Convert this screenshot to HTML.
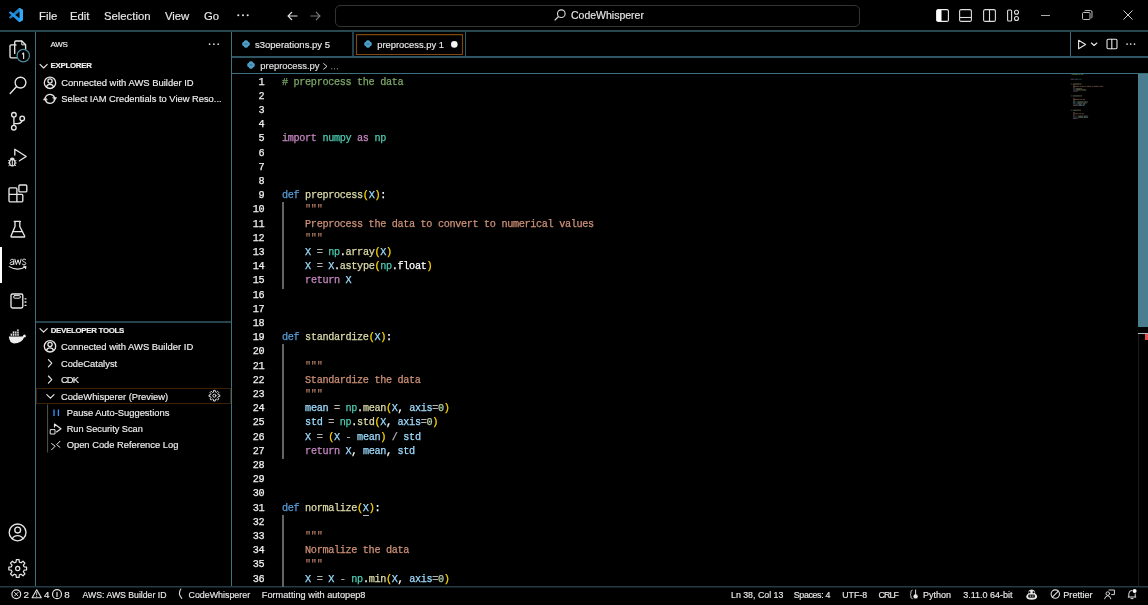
<!DOCTYPE html><html><head><meta charset="utf-8"><style>
html,body{margin:0;padding:0;background:#000;}
body{width:1148px;height:605px;overflow:hidden;position:relative;filter:blur(0.4px);font-family:"Liberation Sans",sans-serif;}
.t{position:absolute;white-space:nowrap;-webkit-text-stroke:0.15px currentColor;}
.r{position:absolute;}
.s{position:absolute;overflow:visible;}
.code{position:absolute;white-space:pre;font-family:"Liberation Mono",monospace;-webkit-text-stroke:0.25px currentColor;}
.code span{-webkit-text-stroke:0.25px currentColor;}
</style></head><body>
<div class="r" style="left:0px;top:30px;width:1148px;height:2px;background:#27484f;"></div>
<div class="r" style="left:35px;top:32px;width:1px;height:554px;background:#40717f;"></div>
<div class="r" style="left:231px;top:32px;width:1px;height:554px;background:#40717f;"></div>
<div class="r" style="left:232px;top:56px;width:916px;height:2px;background:#2d5563;"></div>
<div class="r" style="left:232px;top:73px;width:916px;height:1px;background:#3d6e7d;"></div>
<div class="r" style="left:0px;top:586px;width:1148px;height:1px;background:#223a42;"></div>
<div class="r" style="left:0px;top:587px;width:1148px;height:1px;background:#121f24;"></div>
<div class="r" style="left:36px;top:321px;width:195px;height:2px;background:#25444e;"></div>
<svg class="s" style="left:9px;top:8px" width="14" height="14" viewBox="0 0 100 100"><path fill="#1b80c8" d="M96.46 10.8 L75.86 0.87 C73.47 -0.28 70.62 0.21 68.75 2.08 L1.29 63.57 C-0.52 65.22 -0.52 68.08 1.29 69.73 L6.8 74.74 C8.29 76.09 10.53 76.19 12.13 74.98 L93.36 13.36 C96.08 11.3 100 13.24 100 16.66 V16.42 C100 14.02 98.63 11.84 96.46 10.8 Z"/><path fill="#2196e8" d="M96.46 89.2 L75.86 99.13 C73.47 100.28 70.62 99.79 68.75 97.92 L1.29 36.43 C-0.52 34.78 -0.52 31.92 1.29 30.27 L6.8 25.26 C8.29 23.91 10.53 23.81 12.13 25.02 L93.36 86.64 C96.08 88.7 100 86.76 100 83.34 V83.58 C100 85.98 98.63 88.16 96.46 89.2 Z"/><path fill="#33a6f5" d="M75.86 99.13 C73.47 100.28 70.62 99.79 68.75 97.92 C71.06 100.23 75 98.6 75 95.33 V4.67 C75 1.4 71.06 -0.23 68.75 2.08 C70.62 0.21 73.47 -0.28 75.86 0.87 L96.46 10.79 C98.63 11.84 100 14.02 100 16.42 V83.58 C100 85.98 98.63 88.16 96.46 89.21 Z"/></svg>
<div class="t" style="left:39px;top:10.83px;font-size:11.3px;line-height:11.3px;color:#e8e8e8;">File</div>
<div class="t" style="left:70px;top:10.83px;font-size:11.3px;line-height:11.3px;color:#e8e8e8;">Edit</div>
<div class="t" style="left:104px;top:10.83px;font-size:11.3px;line-height:11.3px;color:#e8e8e8;">Selection</div>
<div class="t" style="left:165px;top:10.83px;font-size:11.3px;line-height:11.3px;color:#e8e8e8;">View</div>
<div class="t" style="left:204px;top:10.83px;font-size:11.3px;line-height:11.3px;color:#e8e8e8;">Go</div>
<svg class="s" style="left:230px;top:10px" width="24" height="10" viewBox="230 10 24 10"><circle cx="238.3" cy="15.3" r="1.05" fill="#e0e0e0"/><circle cx="243" cy="15.3" r="1.05" fill="#e0e0e0"/><circle cx="247.7" cy="15.3" r="1.05" fill="#e0e0e0"/></svg>
<svg class="s" style="left:287px;top:10.6px;" width="11" height="10" viewBox="0 0 11 10" fill="none" stroke="#fff" stroke-width="1"><path d="M10.5 5 H1 M5 1 L1 5 L5 9" stroke="#ddd" stroke-width="1.1"/></svg>
<svg class="s" style="left:310px;top:10.6px;" width="11" height="10" viewBox="0 0 11 10" fill="none" stroke="#fff" stroke-width="1"><path d="M0.5 5 H10 M6 1 L10 5 L6 9" stroke="#777" stroke-width="1.1"/></svg>
<div class="r" style="left:335px;top:5px;width:523px;height:20px;background:transparent;border:1px solid #333;border-radius:5px;"></div>
<svg class="s" style="left:554px;top:9px;" width="12" height="12" viewBox="0 0 12 12" fill="none" stroke="#fff" stroke-width="1"><circle cx="7.3" cy="4.7" r="3.8" stroke="#ddd" stroke-width="1.1"/><path d="M4.5 7.5 L0.7 11.3" stroke="#ddd" stroke-width="1.2"/></svg>
<div class="t" style="left:571px;top:10.41px;font-size:10.5px;line-height:10.5px;color:#e8e8e8;">CodeWhisperer</div>
<svg class="s" style="left:936px;top:9px;" width="13" height="13" viewBox="0 0 13 13" fill="none" stroke="#fff" stroke-width="1"><rect x="0.6" y="0.6" width="11.8" height="11.8" rx="1.5" stroke="#eee" stroke-width="1.1"/><rect x="1" y="1" width="4.5" height="11" fill="#fff" stroke="none"/></svg>
<svg class="s" style="left:959px;top:9px;" width="13" height="13" viewBox="0 0 13 13" fill="none" stroke="#fff" stroke-width="1"><rect x="0.6" y="0.6" width="11.8" height="11.8" rx="1.5" stroke="#ddd" stroke-width="1.1"/><path d="M1 8.5 H12" stroke="#ddd" stroke-width="1.1"/></svg>
<svg class="s" style="left:983px;top:9px;" width="13" height="13" viewBox="0 0 13 13" fill="none" stroke="#fff" stroke-width="1"><rect x="0.6" y="0.6" width="11.8" height="11.8" rx="1.5" stroke="#ddd" stroke-width="1.1"/><path d="M6.5 1 V12" stroke="#ddd" stroke-width="1.1"/></svg>
<svg class="s" style="left:1007px;top:9px;" width="13" height="13" viewBox="0 0 13 13" fill="none" stroke="#fff" stroke-width="1"><rect x="0.6" y="1" width="4" height="11" rx="1" stroke="#ddd" stroke-width="1.1"/><circle cx="9.5" cy="3.2" r="2" stroke="#ddd" stroke-width="1.1"/><circle cx="9.5" cy="9.5" r="2" stroke="#ddd" stroke-width="1.1"/></svg>
<div class="r" style="left:1041px;top:15px;width:9px;height:1px;background:#aaa;"></div>
<svg class="s" style="left:1082px;top:10px;" width="11" height="10" viewBox="0 0 11 10" fill="none" stroke="#fff" stroke-width="1"><rect x="0.5" y="2.5" width="7.5" height="7" rx="1" stroke="#c8c8c8" stroke-width="0.95"/><path d="M2.5 1 Q2.8 0.5 3.5 0.5 H8.5 Q10 0.5 10 2 V7 Q10 7.8 9.2 8" stroke="#c8c8c8" stroke-width="0.95"/></svg>
<svg class="s" style="left:1123px;top:10px;" width="10" height="10" viewBox="0 0 10 10" fill="none" stroke="#fff" stroke-width="1"><path d="M0.5 0.5 L9.5 9.5 M9.5 0.5 L0.5 9.5" stroke="#d0d0d0" stroke-width="1"/></svg>
<svg class="s" style="left:0;top:0" width="36" height="605" viewBox="0 0 36 605" fill="none" stroke="#e6e6e6" stroke-width="1.35" stroke-linejoin="round" stroke-linecap="round">
<!-- explorer -->
<path d="M16 44.9 H11.2 Q10 44.9 10 46.1 V56.6 Q10 57.8 11.2 57.8 H17"/>
<path d="M14.7 53.4 V42.2 Q14.7 41 15.9 41 H21.8 L25.6 44.8 V49.5"/>
<path d="M21.8 41 V44.8 H25.6" stroke-width="1"/>
<circle cx="23.3" cy="55.6" r="6.2" fill="#000" stroke="#4a8b9e" stroke-width="1.2"/>
<path d="M22.4 53.9 L23.6 53 V58.4" stroke="#ddd" stroke-width="1.2"/>
<!-- search -->
<circle cx="20.5" cy="82.6" r="5.4"/>
<path d="M16.6 86.6 L10.2 93.4" stroke-width="1.4"/>
<!-- scm -->
<circle cx="13.9" cy="114.8" r="2.3"/>
<circle cx="13.8" cy="127.7" r="2.3"/>
<circle cx="22.2" cy="118.4" r="2.3"/>
<path d="M13.9 117.1 V125.4 M22 120.7 Q21.2 123.6 17 123.6 H13.9"/>
<!-- run debug -->
<path d="M14.8 155 V149.2 L26.2 156.5 L19.4 160.8"/>
<ellipse cx="12.3" cy="162.6" rx="2.7" ry="3.3" stroke-width="1.2"/>
<path d="M10.6 159 Q12.3 157.2 14 159" stroke-width="1.1"/>
<path d="M8.6 160.6 L9.8 161.2 M8.4 163 H9.6 M8.8 165.6 L9.9 164.8 M16 160.6 L14.8 161.2 M16.2 163 H15 M15.8 165.6 L14.7 164.8 M12.3 160.2 V165.6" stroke-width="1"/>
<!-- extensions -->
<path d="M9 188.9 Q9 187.9 10 187.9 H15.9 Q16.9 187.9 16.9 188.9 V194.4 H21.8 Q22.8 194.4 22.8 195.4 V200.8 Q22.8 201.8 21.8 201.8 H10 Q9 201.8 9 200.8 Z M9 194.4 H16.9 V201.8"/>
<rect x="18.9" y="185" width="7.9" height="6.9" rx="1"/>
<!-- flask -->
<path d="M14.3 221.4 H20.4 M15 221.4 V226.5 L11 236 Q10.8 237 11.8 237 H23.9 Q24.9 237 24.6 236 L19.8 226.5 V221.4 M12.6 231.6 H22.6"/>
<!-- aws -->
<path d="M10.3 260.3 Q11.5 258.8 13 259.3 Q13.8 259.6 13.8 260.8 V264.6 M13.8 261.8 Q10 261.6 10 263.4 Q10.2 264.9 12 264.6 Q13.2 264.3 13.8 263.2 M14.9 259.2 L16.4 264.6 L18 259.8 L19.6 264.6 L21.1 259.2 M25.6 259.6 Q24.8 259 23.8 259.1 Q22.3 259.3 22.6 260.9 Q23 261.8 24.3 262 Q25.9 262.4 25.8 263.7 Q25.5 265 23.8 264.8 Q22.8 264.6 22.2 264" stroke-width="1"/>
<path d="M9.2 266.6 Q17.6 271.6 25.6 266.8 M23.6 266.2 L25.9 266.6 L25.6 268.8" stroke-width="1.05"/>
<!-- notebook -->
<rect x="11" y="294" width="11.8" height="14" rx="1.4"/>
<rect x="13.6" y="295.6" width="6.8" height="2.6" rx="1.2" stroke-width="1"/>
<path d="M25 298.8 H26 M25 302 H26 M25 305.3 H26" stroke-width="1.3"/>
<!-- docker -->
<path d="M8.8 336.6 H22.6 Q23.5 334.2 24.8 334.6 Q25.6 335.8 26.3 335.9 Q25.2 337.6 24 337.6 Q22 343.4 14 343.4 Q9.4 343.2 8.8 336.6 Z" fill="#eee" stroke="none"/>
<path d="M10.4 335.8 V333.6 H12.4 V335.8 M12.6 335.8 V333.6 H14.6 V335.8 M14.8 335.8 V333.6 H16.8 V335.8 M16.9 335.8 V333.6 H18.9 V335.8 M12.6 333.4 V331.2 H14.6 V333.4 M14.8 333.4 V331.2 H16.8 V333.4 M16.9 333.4 V331.2 H18.9 V333.4 M16.9 331 V329.2 H18.9 V331" fill="#eee" stroke="#000" stroke-width="0.4"/>
<!-- account -->
<circle cx="17.6" cy="532.4" r="8.4"/>
<circle cx="17.7" cy="530.1" r="2.9"/>
<path d="M12.3 538.9 Q13.6 535.6 17.6 535.6 Q21.6 535.6 23 538.9"/>
<!-- settings -->
<path d="M16.03 562.11 L16.33 559.61 L19.07 559.61 L19.37 562.11 L21.04 562.81 L23.02 561.24 L24.96 563.18 L23.39 565.16 L24.09 566.83 L26.59 567.13 L26.59 569.87 L24.09 570.17 L23.39 571.84 L24.96 573.82 L23.02 575.76 L21.04 574.19 L19.37 574.89 L19.07 577.39 L16.33 577.39 L16.03 574.89 L14.36 574.19 L12.38 575.76 L10.44 573.82 L12.01 571.84 L11.31 570.17 L8.81 569.87 L8.81 567.13 L11.31 566.83 L12.01 565.16 L10.44 563.18 L12.38 561.24 L14.36 562.81 Z" stroke-width="1.2"/>
<circle cx="17.7" cy="568.5" r="2.1" stroke-width="1.2"/>
</svg>
<div class="t" style="left:50.6px;top:41.03px;font-size:8px;line-height:8px;color:#f0f0f0;letter-spacing:-0.3px;">AWS</div>
<div class="t" style="left:50.6px;top:62.31px;font-size:7.9px;line-height:7.9px;color:#f0f0f0;font-weight:bold;letter-spacing:-0.3px;">EXPLORER</div>
<div class="t" style="left:61.3px;top:78.40px;font-size:9.45px;line-height:9.45px;color:#f0f0f0;">Connected with AWS Builder ID</div>
<div class="t" style="left:61.3px;top:95.08px;font-size:9.36px;line-height:9.36px;color:#f0f0f0;">Select IAM Credentials to View Reso...</div>
<div class="t" style="left:50.7px;top:326.51px;font-size:7.9px;line-height:7.9px;color:#f0f0f0;font-weight:bold;letter-spacing:-0.3px;">DEVELOPER TOOLS</div>
<div class="t" style="left:60.9px;top:342.00px;font-size:9.45px;line-height:9.45px;color:#f0f0f0;">Connected with AWS Builder ID</div>
<div class="t" style="left:60.9px;top:358.84px;font-size:9.4px;line-height:9.4px;color:#f0f0f0;">CodeCatalyst</div>
<div class="t" style="left:60.9px;top:375.04px;font-size:9.4px;line-height:9.4px;color:#f0f0f0;letter-spacing:-0.9px;">CDK</div>
<div class="t" style="left:60.9px;top:391.84px;font-size:9.4px;line-height:9.4px;color:#f0f0f0;">CodeWhisperer (Preview)</div>
<div class="t" style="left:66.7px;top:408.04px;font-size:9.4px;line-height:9.4px;color:#f0f0f0;">Pause Auto-Suggestions</div>
<div class="t" style="left:66.7px;top:424.81px;font-size:9.2px;line-height:9.2px;color:#f0f0f0;">Run Security Scan</div>
<div class="t" style="left:66.7px;top:441.09px;font-size:9.35px;line-height:9.35px;color:#f0f0f0;">Open Code Reference Log</div>
<div class="r" style="left:352px;top:32px;width:2px;height:24px;background:#23414b;"></div>
<div class="r" style="left:465px;top:32px;width:1px;height:24px;background:#30596a;"></div>
<div class="r" style="left:1070px;top:32px;width:1px;height:24px;background:#3d6e7d;"></div>
<svg class="s" style="left:242px;top:40.2px" width="8" height="8" viewBox="0 0 16 16"><g fill="#4d9fc8"><rect x="0.5" y="3.6" width="15" height="8.8" rx="3.6"/><rect x="3.6" y="0.5" width="8.8" height="15" rx="3.6"/></g><path d="M5 8 H11" stroke="#1d4a5e" stroke-width="1.2"/></svg>
<div class="t" style="left:255px;top:39.96px;font-size:9.5px;line-height:9.5px;color:#e8e8e8;">s3operations.py 5</div>
<svg class="s" style="left:364px;top:40px" width="8" height="8" viewBox="0 0 16 16"><g fill="#4d9fc8"><rect x="0.5" y="3.6" width="15" height="8.8" rx="3.6"/><rect x="3.6" y="0.5" width="8.8" height="15" rx="3.6"/></g><path d="M5 8 H11" stroke="#1d4a5e" stroke-width="1.2"/></svg>
<div class="t" style="left:377.2px;top:40.04px;font-size:9.4px;line-height:9.4px;color:#e8e8e8;">preprocess.py 1</div>
<svg class="s" style="left:246.7px;top:61.2px" width="8" height="8" viewBox="0 0 16 16"><g fill="#4d9fc8"><rect x="0.5" y="3.6" width="15" height="8.8" rx="3.6"/><rect x="3.6" y="0.5" width="8.8" height="15" rx="3.6"/></g><path d="M5 8 H11" stroke="#1d4a5e" stroke-width="1.2"/></svg>
<div class="t" style="left:260.3px;top:60.60px;font-size:9.45px;line-height:9.45px;color:#e0e0e0;">preprocess.py</div>
<svg class="s" style="left:0;top:0" width="1148" height="605" viewBox="0 0 1148 605" fill="none" stroke="#e6e6e6" stroke-width="1.15" stroke-linejoin="round" stroke-linecap="round">
<!-- sidebar title dots -->
<circle cx="209.6" cy="44.2" r="0.85" fill="#ddd" stroke="none"/><circle cx="213.9" cy="44.2" r="0.85" fill="#ddd" stroke="none"/><circle cx="218.2" cy="44.2" r="0.85" fill="#ddd" stroke="none"/>
<!-- explorer chevron -->
<path d="M40 64.4 L43.6 68 L47.2 64.4"/>
<!-- person icon -->
<circle cx="50" cy="82.8" r="5.7" stroke-width="1.3"/>
<circle cx="50" cy="81" r="2.1" stroke-width="1.3"/>
<path d="M46.4 87 Q47.2 84.3 50 84.3 Q52.8 84.3 53.6 87" stroke-width="1.3"/>
<!-- sync icon -->
<path d="M45.4 97.6 Q46.6 94.3 50 94.3 Q53.4 94.3 54.5 97.4" stroke-width="1.3"/>
<path d="M54.6 100 Q53.4 103.3 50 103.3 Q46.6 103.3 45.5 100.2" stroke-width="1.3"/>
<path d="M53 97.6 L56.6 97.6 L54.9 100.2 Z" fill="#e6e6e6" stroke-width="0.6"/>
<path d="M47 100 L43.4 100 L45.1 97.4 Z" fill="#e6e6e6" stroke-width="0.6"/>
<!-- developer tools chevron -->
<path d="M40 328.6 L43.6 332.2 L47.2 328.6"/>
<circle cx="50" cy="346.3" r="5.7" stroke-width="1.3"/>
<circle cx="50" cy="344.5" r="2.1" stroke-width="1.3"/>
<path d="M46.4 350.5 Q47.2 347.8 50 347.8 Q52.8 347.8 53.6 350.5" stroke-width="1.3"/>
<!-- chevrons right -->
<path d="M48.4 359.6 L51.8 363.2 L48.4 366.8"/>
<path d="M48.4 376 L51.8 379.6 L48.4 383.2"/>
<!-- codewhisperer chevron down -->
<path d="M46.8 394.6 L50.4 398.2 L54 394.6"/>
<!-- gear -->
<path d="M213.42 391.93 L213.58 390.36 L215.22 390.36 L215.38 391.93 L216.37 392.34 L217.59 391.34 L218.76 392.51 L217.76 393.73 L218.17 394.72 L219.74 394.88 L219.74 396.52 L218.17 396.68 L217.76 397.67 L218.76 398.89 L217.59 400.06 L216.37 399.06 L215.38 399.47 L215.22 401.04 L213.58 401.04 L213.42 399.47 L212.43 399.06 L211.21 400.06 L210.04 398.89 L211.04 397.67 L210.63 396.68 L209.06 396.52 L209.06 394.88 L210.63 394.72 L211.04 393.73 L210.04 392.51 L211.21 391.34 L212.43 392.34 Z" stroke-width="0.95"/>
<circle cx="214.4" cy="395.7" r="1.5" stroke-width="0.95"/>
<!-- tree guide -->
<path d="M47.6 404.5 V452.5" stroke="#555" stroke-width="1" stroke-linecap="butt"/>
<!-- pause icon -->
<path d="M54 409.6 V416 M58.4 409.6 V416" stroke="#3794ff" stroke-width="1.3" stroke-linecap="butt"/>
<!-- run security scan icon -->
<path d="M54.5 427 V424 L61 428.8 L56.5 432"/>
<rect x="50.6" y="429.6" width="4.4" height="4.4" stroke-width="1"/>
<!-- open code reference log -->
<path d="M51.6 443.6 L55.2 446.2 L51.6 449.8 M60 441.2 L56.6 444.6 L60 447.4" stroke-width="1"/>
<!-- CodeWhisperer row focus box -->
<rect x="36.5" y="388.5" width="194" height="15" stroke="#f38518" stroke-width="1" stroke-dasharray="1 1" stroke-linecap="butt" opacity="0.5"/>
<!-- tab active border -->
<rect x="356.5" y="34.6" width="106" height="19.9" stroke="#80470e" stroke-width="1.15" stroke-linecap="butt"/>
<circle cx="454.3" cy="44.4" r="3.3" fill="#f4f4f4" stroke="none"/>
<!-- editor actions -->
<path d="M1078.6 40.2 L1085.6 44.5 L1078.6 48.8 Z" stroke-width="1.1"/>
<path d="M1091.4 43 L1094.1 45.5 L1096.8 43"/>
<rect x="1107" y="39.2" width="10" height="9.6" rx="1.2" stroke-width="1.1"/>
<path d="M1111.8 39.4 V48.6" stroke-width="1.1"/>
<circle cx="1127.1" cy="44.1" r="0.85" fill="#ddd" stroke="none"/><circle cx="1130.7" cy="44.1" r="0.85" fill="#ddd" stroke="none"/><circle cx="1134.5" cy="44.1" r="0.85" fill="#ddd" stroke="none"/>
<!-- breadcrumb chevron -->
<path d="M323.6 63.6 L327 66.4 L323.6 69.2" stroke-width="0.9"/>
<circle cx="331.8" cy="68.8" r="0.5" fill="#ddd" stroke="none"/><circle cx="334.6" cy="68.8" r="0.5" fill="#ddd" stroke="none"/><circle cx="337.4" cy="68.8" r="0.5" fill="#ddd" stroke="none"/>
</svg>
<div class="code" style="left:224.2px;width:40px;text-align:right;top:75.60px;font-size:10.2px;letter-spacing:-0.34px;line-height:14.2px;color:#f0f0f0">1</div>
<div class="code" style="left:282.0px;top:75.60px;font-size:10.2px;letter-spacing:-0.34px;line-height:14.2px"><span style="color:#7ca668"># preprocess the data</span></div>
<div class="code" style="left:224.2px;width:40px;text-align:right;top:89.80px;font-size:10.2px;letter-spacing:-0.34px;line-height:14.2px;color:#f0f0f0">2</div>
<div class="code" style="left:224.2px;width:40px;text-align:right;top:104.00px;font-size:10.2px;letter-spacing:-0.34px;line-height:14.2px;color:#f0f0f0">3</div>
<div class="code" style="left:224.2px;width:40px;text-align:right;top:118.20px;font-size:10.2px;letter-spacing:-0.34px;line-height:14.2px;color:#f0f0f0">4</div>
<div class="code" style="left:224.2px;width:40px;text-align:right;top:132.40px;font-size:10.2px;letter-spacing:-0.34px;line-height:14.2px;color:#f0f0f0">5</div>
<div class="code" style="left:282.0px;top:132.40px;font-size:10.2px;letter-spacing:-0.34px;line-height:14.2px"><span style="color:#c586c0">import</span><span style="color:#ffffff"> </span><span style="color:#4ec9b0">numpy</span><span style="color:#ffffff"> </span><span style="color:#c586c0">as</span><span style="color:#ffffff"> </span><span style="color:#4ec9b0">np</span></div>
<div class="code" style="left:224.2px;width:40px;text-align:right;top:146.60px;font-size:10.2px;letter-spacing:-0.34px;line-height:14.2px;color:#f0f0f0">6</div>
<div class="code" style="left:224.2px;width:40px;text-align:right;top:160.80px;font-size:10.2px;letter-spacing:-0.34px;line-height:14.2px;color:#f0f0f0">7</div>
<div class="code" style="left:224.2px;width:40px;text-align:right;top:175.00px;font-size:10.2px;letter-spacing:-0.34px;line-height:14.2px;color:#f0f0f0">8</div>
<div class="code" style="left:224.2px;width:40px;text-align:right;top:189.20px;font-size:10.2px;letter-spacing:-0.34px;line-height:14.2px;color:#f0f0f0">9</div>
<div class="code" style="left:282.0px;top:189.20px;font-size:10.2px;letter-spacing:-0.34px;line-height:14.2px"><span style="color:#569cd6">def</span><span style="color:#ffffff"> </span><span style="color:#dcdcaa">preprocess</span><span style="color:#ffd700">(</span><span style="color:#9cdcfe">X</span><span style="color:#ffd700">)</span><span style="color:#ffffff">:</span></div>
<div class="code" style="left:224.2px;width:40px;text-align:right;top:203.40px;font-size:10.2px;letter-spacing:-0.34px;line-height:14.2px;color:#f0f0f0">10</div>
<div class="code" style="left:282.0px;top:203.40px;font-size:10.2px;letter-spacing:-0.34px;line-height:14.2px"><span style="color:#b07a62">    """</span></div>
<div class="code" style="left:224.2px;width:40px;text-align:right;top:217.60px;font-size:10.2px;letter-spacing:-0.34px;line-height:14.2px;color:#f0f0f0">11</div>
<div class="code" style="left:282.0px;top:217.60px;font-size:10.2px;letter-spacing:-0.34px;line-height:14.2px"><span style="color:#ce9178">    Preprocess the data to convert to numerical values</span></div>
<div class="code" style="left:224.2px;width:40px;text-align:right;top:231.80px;font-size:10.2px;letter-spacing:-0.34px;line-height:14.2px;color:#f0f0f0">12</div>
<div class="code" style="left:282.0px;top:231.80px;font-size:10.2px;letter-spacing:-0.34px;line-height:14.2px"><span style="color:#b07a62">    """</span></div>
<div class="code" style="left:224.2px;width:40px;text-align:right;top:246.00px;font-size:10.2px;letter-spacing:-0.34px;line-height:14.2px;color:#f0f0f0">13</div>
<div class="code" style="left:282.0px;top:246.00px;font-size:10.2px;letter-spacing:-0.34px;line-height:14.2px"><span style="color:#ffffff">    </span><span style="color:#9cdcfe">X</span><span style="color:#b4b4b4"> = </span><span style="color:#4ec9b0">np</span><span style="color:#ffffff">.</span><span style="color:#dcdcaa">array</span><span style="color:#ffd700">(</span><span style="color:#9cdcfe">X</span><span style="color:#ffd700">)</span></div>
<div class="code" style="left:224.2px;width:40px;text-align:right;top:260.20px;font-size:10.2px;letter-spacing:-0.34px;line-height:14.2px;color:#f0f0f0">14</div>
<div class="code" style="left:282.0px;top:260.20px;font-size:10.2px;letter-spacing:-0.34px;line-height:14.2px"><span style="color:#ffffff">    </span><span style="color:#9cdcfe">X</span><span style="color:#b4b4b4"> = </span><span style="color:#9cdcfe">X</span><span style="color:#ffffff">.</span><span style="color:#dcdcaa">astype</span><span style="color:#ffd700">(</span><span style="color:#4ec9b0">np</span><span style="color:#ffffff">.</span><span style="color:#ffffff">float</span><span style="color:#ffd700">)</span></div>
<div class="code" style="left:224.2px;width:40px;text-align:right;top:274.40px;font-size:10.2px;letter-spacing:-0.34px;line-height:14.2px;color:#f0f0f0">15</div>
<div class="code" style="left:282.0px;top:274.40px;font-size:10.2px;letter-spacing:-0.34px;line-height:14.2px"><span style="color:#ffffff">    </span><span style="color:#c586c0">return</span><span style="color:#ffffff"> </span><span style="color:#9cdcfe">X</span></div>
<div class="code" style="left:224.2px;width:40px;text-align:right;top:288.60px;font-size:10.2px;letter-spacing:-0.34px;line-height:14.2px;color:#f0f0f0">16</div>
<div class="code" style="left:224.2px;width:40px;text-align:right;top:302.80px;font-size:10.2px;letter-spacing:-0.34px;line-height:14.2px;color:#f0f0f0">17</div>
<div class="code" style="left:224.2px;width:40px;text-align:right;top:317.00px;font-size:10.2px;letter-spacing:-0.34px;line-height:14.2px;color:#f0f0f0">18</div>
<div class="code" style="left:224.2px;width:40px;text-align:right;top:331.20px;font-size:10.2px;letter-spacing:-0.34px;line-height:14.2px;color:#f0f0f0">19</div>
<div class="code" style="left:282.0px;top:331.20px;font-size:10.2px;letter-spacing:-0.34px;line-height:14.2px"><span style="color:#569cd6">def</span><span style="color:#ffffff"> </span><span style="color:#dcdcaa">standardize</span><span style="color:#ffd700">(</span><span style="color:#9cdcfe">X</span><span style="color:#ffd700">)</span><span style="color:#ffffff">:</span></div>
<div class="code" style="left:224.2px;width:40px;text-align:right;top:345.40px;font-size:10.2px;letter-spacing:-0.34px;line-height:14.2px;color:#f0f0f0">20</div>
<div class="code" style="left:224.2px;width:40px;text-align:right;top:359.60px;font-size:10.2px;letter-spacing:-0.34px;line-height:14.2px;color:#f0f0f0">21</div>
<div class="code" style="left:282.0px;top:359.60px;font-size:10.2px;letter-spacing:-0.34px;line-height:14.2px"><span style="color:#b07a62">    """</span></div>
<div class="code" style="left:224.2px;width:40px;text-align:right;top:373.80px;font-size:10.2px;letter-spacing:-0.34px;line-height:14.2px;color:#f0f0f0">22</div>
<div class="code" style="left:282.0px;top:373.80px;font-size:10.2px;letter-spacing:-0.34px;line-height:14.2px"><span style="color:#ce9178">    Standardize the data</span></div>
<div class="code" style="left:224.2px;width:40px;text-align:right;top:388.00px;font-size:10.2px;letter-spacing:-0.34px;line-height:14.2px;color:#f0f0f0">23</div>
<div class="code" style="left:282.0px;top:388.00px;font-size:10.2px;letter-spacing:-0.34px;line-height:14.2px"><span style="color:#b07a62">    """</span></div>
<div class="code" style="left:224.2px;width:40px;text-align:right;top:402.20px;font-size:10.2px;letter-spacing:-0.34px;line-height:14.2px;color:#f0f0f0">24</div>
<div class="code" style="left:282.0px;top:402.20px;font-size:10.2px;letter-spacing:-0.34px;line-height:14.2px"><span style="color:#ffffff">    </span><span style="color:#9cdcfe">mean</span><span style="color:#b4b4b4"> = </span><span style="color:#4ec9b0">np</span><span style="color:#ffffff">.</span><span style="color:#dcdcaa">mean</span><span style="color:#ffd700">(</span><span style="color:#9cdcfe">X</span><span style="color:#ffffff">, </span><span style="color:#9cdcfe">axis</span><span style="color:#b4b4b4">=</span><span style="color:#b5cea8">0</span><span style="color:#ffd700">)</span></div>
<div class="code" style="left:224.2px;width:40px;text-align:right;top:416.40px;font-size:10.2px;letter-spacing:-0.34px;line-height:14.2px;color:#f0f0f0">25</div>
<div class="code" style="left:282.0px;top:416.40px;font-size:10.2px;letter-spacing:-0.34px;line-height:14.2px"><span style="color:#ffffff">    </span><span style="color:#9cdcfe">std</span><span style="color:#b4b4b4"> = </span><span style="color:#4ec9b0">np</span><span style="color:#ffffff">.</span><span style="color:#dcdcaa">std</span><span style="color:#ffd700">(</span><span style="color:#9cdcfe">X</span><span style="color:#ffffff">, </span><span style="color:#9cdcfe">axis</span><span style="color:#b4b4b4">=</span><span style="color:#b5cea8">0</span><span style="color:#ffd700">)</span></div>
<div class="code" style="left:224.2px;width:40px;text-align:right;top:430.60px;font-size:10.2px;letter-spacing:-0.34px;line-height:14.2px;color:#f0f0f0">26</div>
<div class="code" style="left:282.0px;top:430.60px;font-size:10.2px;letter-spacing:-0.34px;line-height:14.2px"><span style="color:#ffffff">    </span><span style="color:#9cdcfe">X</span><span style="color:#b4b4b4"> = </span><span style="color:#ffd700">(</span><span style="color:#9cdcfe">X</span><span style="color:#b4b4b4"> - </span><span style="color:#9cdcfe">mean</span><span style="color:#ffd700">)</span><span style="color:#b4b4b4"> / </span><span style="color:#9cdcfe">std</span></div>
<div class="code" style="left:224.2px;width:40px;text-align:right;top:444.80px;font-size:10.2px;letter-spacing:-0.34px;line-height:14.2px;color:#f0f0f0">27</div>
<div class="code" style="left:282.0px;top:444.80px;font-size:10.2px;letter-spacing:-0.34px;line-height:14.2px"><span style="color:#ffffff">    </span><span style="color:#c586c0">return</span><span style="color:#ffffff"> </span><span style="color:#9cdcfe">X</span><span style="color:#ffffff">, </span><span style="color:#9cdcfe">mean</span><span style="color:#ffffff">, </span><span style="color:#9cdcfe">std</span></div>
<div class="code" style="left:224.2px;width:40px;text-align:right;top:459.00px;font-size:10.2px;letter-spacing:-0.34px;line-height:14.2px;color:#f0f0f0">28</div>
<div class="code" style="left:224.2px;width:40px;text-align:right;top:473.20px;font-size:10.2px;letter-spacing:-0.34px;line-height:14.2px;color:#f0f0f0">29</div>
<div class="code" style="left:224.2px;width:40px;text-align:right;top:487.40px;font-size:10.2px;letter-spacing:-0.34px;line-height:14.2px;color:#f0f0f0">30</div>
<div class="code" style="left:224.2px;width:40px;text-align:right;top:501.60px;font-size:10.2px;letter-spacing:-0.34px;line-height:14.2px;color:#f0f0f0">31</div>
<div class="code" style="left:282.0px;top:501.60px;font-size:10.2px;letter-spacing:-0.34px;line-height:14.2px"><span style="color:#569cd6">def</span><span style="color:#ffffff"> </span><span style="color:#dcdcaa">normalize</span><span style="color:#ffd700">(</span><span style="color:#9cdcfe">X</span><span style="color:#ffd700">)</span><span style="color:#ffffff">:</span></div>
<div class="code" style="left:224.2px;width:40px;text-align:right;top:515.80px;font-size:10.2px;letter-spacing:-0.34px;line-height:14.2px;color:#f0f0f0">32</div>
<div class="code" style="left:224.2px;width:40px;text-align:right;top:530.00px;font-size:10.2px;letter-spacing:-0.34px;line-height:14.2px;color:#f0f0f0">33</div>
<div class="code" style="left:282.0px;top:530.00px;font-size:10.2px;letter-spacing:-0.34px;line-height:14.2px"><span style="color:#b07a62">    """</span></div>
<div class="code" style="left:224.2px;width:40px;text-align:right;top:544.20px;font-size:10.2px;letter-spacing:-0.34px;line-height:14.2px;color:#f0f0f0">34</div>
<div class="code" style="left:282.0px;top:544.20px;font-size:10.2px;letter-spacing:-0.34px;line-height:14.2px"><span style="color:#ce9178">    Normalize the data</span></div>
<div class="code" style="left:224.2px;width:40px;text-align:right;top:558.40px;font-size:10.2px;letter-spacing:-0.34px;line-height:14.2px;color:#f0f0f0">35</div>
<div class="code" style="left:282.0px;top:558.40px;font-size:10.2px;letter-spacing:-0.34px;line-height:14.2px"><span style="color:#b07a62">    """</span></div>
<div class="code" style="left:224.2px;width:40px;text-align:right;top:572.60px;font-size:10.2px;letter-spacing:-0.34px;line-height:14.2px;color:#f0f0f0">36</div>
<div class="code" style="left:282.0px;top:572.60px;font-size:10.2px;letter-spacing:-0.34px;line-height:14.2px"><span style="color:#ffffff">    </span><span style="color:#9cdcfe">X</span><span style="color:#b4b4b4"> = </span><span style="color:#9cdcfe">X</span><span style="color:#b4b4b4"> - </span><span style="color:#4ec9b0">np</span><span style="color:#ffffff">.</span><span style="color:#dcdcaa">min</span><span style="color:#ffd700">(</span><span style="color:#9cdcfe">X</span><span style="color:#ffffff">, </span><span style="color:#9cdcfe">axis</span><span style="color:#b4b4b4">=</span><span style="color:#b5cea8">0</span><span style="color:#ffd700">)</span></div>
<div class="r" style="left:282px;top:202.4px;width:2px;height:86.2px;background:#646464;"></div>
<div class="r" style="left:282px;top:344.4px;width:2px;height:114.6px;background:#646464;"></div>
<div class="r" style="left:282px;top:514.8px;width:2px;height:72.0px;background:#646464;"></div>
<div class="r" style="left:363px;top:515px;width:6px;height:1px;background:#bbbbbb;"></div>
<svg class="s" style="left:1060px;top:70px" width="78" height="60" viewBox="1060 70 78 60"><rect x="1070.70" y="74.00" width="0.60" height="1" fill="#7ca668" opacity="0.42"/><rect x="1071.90" y="74.00" width="6.00" height="1" fill="#7ca668" opacity="0.42"/><rect x="1078.50" y="74.00" width="1.80" height="1" fill="#7ca668" opacity="0.42"/><rect x="1080.90" y="74.00" width="2.40" height="1" fill="#7ca668" opacity="0.42"/><rect x="1070.70" y="78.76" width="3.60" height="1" fill="#c586c0" opacity="0.42"/><rect x="1074.90" y="78.76" width="3.00" height="1" fill="#4ec9b0" opacity="0.42"/><rect x="1078.50" y="78.76" width="1.20" height="1" fill="#c586c0" opacity="0.42"/><rect x="1080.30" y="78.76" width="1.20" height="1" fill="#4ec9b0" opacity="0.42"/><rect x="1070.70" y="83.52" width="1.80" height="1" fill="#569cd6" opacity="0.42"/><rect x="1073.10" y="83.52" width="6.00" height="1" fill="#dcdcaa" opacity="0.42"/><rect x="1079.10" y="83.52" width="0.60" height="1" fill="#ffd700" opacity="0.42"/><rect x="1079.70" y="83.52" width="0.60" height="1" fill="#9cdcfe" opacity="0.42"/><rect x="1080.30" y="83.52" width="0.60" height="1" fill="#ffd700" opacity="0.42"/><rect x="1080.90" y="83.52" width="0.60" height="1" fill="#ffffff" opacity="0.42"/><rect x="1073.10" y="84.71" width="1.80" height="1" fill="#b07a62" opacity="0.42"/><rect x="1073.10" y="85.90" width="6.00" height="1" fill="#ce9178" opacity="0.42"/><rect x="1079.70" y="85.90" width="1.80" height="1" fill="#ce9178" opacity="0.42"/><rect x="1082.10" y="85.90" width="2.40" height="1" fill="#ce9178" opacity="0.42"/><rect x="1085.10" y="85.90" width="1.20" height="1" fill="#ce9178" opacity="0.42"/><rect x="1086.90" y="85.90" width="4.20" height="1" fill="#ce9178" opacity="0.42"/><rect x="1091.70" y="85.90" width="1.20" height="1" fill="#ce9178" opacity="0.42"/><rect x="1093.50" y="85.90" width="5.40" height="1" fill="#ce9178" opacity="0.42"/><rect x="1099.50" y="85.90" width="3.60" height="1" fill="#ce9178" opacity="0.42"/><rect x="1073.10" y="87.09" width="1.80" height="1" fill="#b07a62" opacity="0.42"/><rect x="1073.10" y="88.28" width="0.60" height="1" fill="#9cdcfe" opacity="0.42"/><rect x="1074.30" y="88.28" width="0.60" height="1" fill="#b4b4b4" opacity="0.42"/><rect x="1075.50" y="88.28" width="1.20" height="1" fill="#4ec9b0" opacity="0.42"/><rect x="1076.70" y="88.28" width="0.60" height="1" fill="#ffffff" opacity="0.42"/><rect x="1077.30" y="88.28" width="3.00" height="1" fill="#dcdcaa" opacity="0.42"/><rect x="1080.30" y="88.28" width="0.60" height="1" fill="#ffd700" opacity="0.42"/><rect x="1080.90" y="88.28" width="0.60" height="1" fill="#9cdcfe" opacity="0.42"/><rect x="1081.50" y="88.28" width="0.60" height="1" fill="#ffd700" opacity="0.42"/><rect x="1073.10" y="89.47" width="0.60" height="1" fill="#9cdcfe" opacity="0.42"/><rect x="1074.30" y="89.47" width="0.60" height="1" fill="#b4b4b4" opacity="0.42"/><rect x="1075.50" y="89.47" width="0.60" height="1" fill="#9cdcfe" opacity="0.42"/><rect x="1076.10" y="89.47" width="0.60" height="1" fill="#ffffff" opacity="0.42"/><rect x="1076.70" y="89.47" width="3.60" height="1" fill="#dcdcaa" opacity="0.42"/><rect x="1080.30" y="89.47" width="0.60" height="1" fill="#ffd700" opacity="0.42"/><rect x="1080.90" y="89.47" width="1.20" height="1" fill="#4ec9b0" opacity="0.42"/><rect x="1082.10" y="89.47" width="0.60" height="1" fill="#ffffff" opacity="0.42"/><rect x="1082.70" y="89.47" width="3.00" height="1" fill="#ffffff" opacity="0.42"/><rect x="1085.70" y="89.47" width="0.60" height="1" fill="#ffd700" opacity="0.42"/><rect x="1073.10" y="90.66" width="3.60" height="1" fill="#c586c0" opacity="0.42"/><rect x="1077.30" y="90.66" width="0.60" height="1" fill="#9cdcfe" opacity="0.42"/><rect x="1070.70" y="95.42" width="1.80" height="1" fill="#569cd6" opacity="0.42"/><rect x="1073.10" y="95.42" width="6.60" height="1" fill="#dcdcaa" opacity="0.42"/><rect x="1079.70" y="95.42" width="0.60" height="1" fill="#ffd700" opacity="0.42"/><rect x="1080.30" y="95.42" width="0.60" height="1" fill="#9cdcfe" opacity="0.42"/><rect x="1080.90" y="95.42" width="0.60" height="1" fill="#ffd700" opacity="0.42"/><rect x="1081.50" y="95.42" width="0.60" height="1" fill="#ffffff" opacity="0.42"/><rect x="1073.10" y="97.80" width="1.80" height="1" fill="#b07a62" opacity="0.42"/><rect x="1073.10" y="98.99" width="6.60" height="1" fill="#ce9178" opacity="0.42"/><rect x="1080.30" y="98.99" width="1.80" height="1" fill="#ce9178" opacity="0.42"/><rect x="1082.70" y="98.99" width="2.40" height="1" fill="#ce9178" opacity="0.42"/><rect x="1073.10" y="100.18" width="1.80" height="1" fill="#b07a62" opacity="0.42"/><rect x="1073.10" y="101.37" width="2.40" height="1" fill="#9cdcfe" opacity="0.42"/><rect x="1076.10" y="101.37" width="0.60" height="1" fill="#b4b4b4" opacity="0.42"/><rect x="1077.30" y="101.37" width="1.20" height="1" fill="#4ec9b0" opacity="0.42"/><rect x="1078.50" y="101.37" width="0.60" height="1" fill="#ffffff" opacity="0.42"/><rect x="1079.10" y="101.37" width="2.40" height="1" fill="#dcdcaa" opacity="0.42"/><rect x="1081.50" y="101.37" width="0.60" height="1" fill="#ffd700" opacity="0.42"/><rect x="1082.10" y="101.37" width="0.60" height="1" fill="#9cdcfe" opacity="0.42"/><rect x="1082.70" y="101.37" width="0.60" height="1" fill="#ffffff" opacity="0.42"/><rect x="1083.90" y="101.37" width="2.40" height="1" fill="#9cdcfe" opacity="0.42"/><rect x="1086.30" y="101.37" width="0.60" height="1" fill="#b4b4b4" opacity="0.42"/><rect x="1086.90" y="101.37" width="0.60" height="1" fill="#b5cea8" opacity="0.42"/><rect x="1087.50" y="101.37" width="0.60" height="1" fill="#ffd700" opacity="0.42"/><rect x="1073.10" y="102.56" width="1.80" height="1" fill="#9cdcfe" opacity="0.42"/><rect x="1075.50" y="102.56" width="0.60" height="1" fill="#b4b4b4" opacity="0.42"/><rect x="1076.70" y="102.56" width="1.20" height="1" fill="#4ec9b0" opacity="0.42"/><rect x="1077.90" y="102.56" width="0.60" height="1" fill="#ffffff" opacity="0.42"/><rect x="1078.50" y="102.56" width="1.80" height="1" fill="#dcdcaa" opacity="0.42"/><rect x="1080.30" y="102.56" width="0.60" height="1" fill="#ffd700" opacity="0.42"/><rect x="1080.90" y="102.56" width="0.60" height="1" fill="#9cdcfe" opacity="0.42"/><rect x="1081.50" y="102.56" width="0.60" height="1" fill="#ffffff" opacity="0.42"/><rect x="1082.70" y="102.56" width="2.40" height="1" fill="#9cdcfe" opacity="0.42"/><rect x="1085.10" y="102.56" width="0.60" height="1" fill="#b4b4b4" opacity="0.42"/><rect x="1085.70" y="102.56" width="0.60" height="1" fill="#b5cea8" opacity="0.42"/><rect x="1086.30" y="102.56" width="0.60" height="1" fill="#ffd700" opacity="0.42"/><rect x="1073.10" y="103.75" width="0.60" height="1" fill="#9cdcfe" opacity="0.42"/><rect x="1074.30" y="103.75" width="0.60" height="1" fill="#b4b4b4" opacity="0.42"/><rect x="1075.50" y="103.75" width="0.60" height="1" fill="#ffd700" opacity="0.42"/><rect x="1076.10" y="103.75" width="0.60" height="1" fill="#9cdcfe" opacity="0.42"/><rect x="1077.30" y="103.75" width="0.60" height="1" fill="#b4b4b4" opacity="0.42"/><rect x="1078.50" y="103.75" width="2.40" height="1" fill="#9cdcfe" opacity="0.42"/><rect x="1080.90" y="103.75" width="0.60" height="1" fill="#ffd700" opacity="0.42"/><rect x="1082.10" y="103.75" width="0.60" height="1" fill="#b4b4b4" opacity="0.42"/><rect x="1083.30" y="103.75" width="1.80" height="1" fill="#9cdcfe" opacity="0.42"/><rect x="1073.10" y="104.94" width="3.60" height="1" fill="#c586c0" opacity="0.42"/><rect x="1077.30" y="104.94" width="0.60" height="1" fill="#9cdcfe" opacity="0.42"/><rect x="1077.90" y="104.94" width="0.60" height="1" fill="#ffffff" opacity="0.42"/><rect x="1079.10" y="104.94" width="2.40" height="1" fill="#9cdcfe" opacity="0.42"/><rect x="1081.50" y="104.94" width="0.60" height="1" fill="#ffffff" opacity="0.42"/><rect x="1082.70" y="104.94" width="1.80" height="1" fill="#9cdcfe" opacity="0.42"/><rect x="1070.70" y="109.70" width="1.80" height="1" fill="#569cd6" opacity="0.42"/><rect x="1073.10" y="109.70" width="5.40" height="1" fill="#dcdcaa" opacity="0.42"/><rect x="1078.50" y="109.70" width="0.60" height="1" fill="#ffd700" opacity="0.42"/><rect x="1079.10" y="109.70" width="0.60" height="1" fill="#9cdcfe" opacity="0.42"/><rect x="1079.70" y="109.70" width="0.60" height="1" fill="#ffd700" opacity="0.42"/><rect x="1080.30" y="109.70" width="0.60" height="1" fill="#ffffff" opacity="0.42"/><rect x="1073.10" y="112.08" width="1.80" height="1" fill="#b07a62" opacity="0.42"/><rect x="1073.10" y="113.27" width="5.40" height="1" fill="#ce9178" opacity="0.42"/><rect x="1079.10" y="113.27" width="1.80" height="1" fill="#ce9178" opacity="0.42"/><rect x="1081.50" y="113.27" width="2.40" height="1" fill="#ce9178" opacity="0.42"/><rect x="1073.10" y="114.46" width="1.80" height="1" fill="#b07a62" opacity="0.42"/><rect x="1073.10" y="115.65" width="0.60" height="1" fill="#9cdcfe" opacity="0.42"/><rect x="1074.30" y="115.65" width="0.60" height="1" fill="#b4b4b4" opacity="0.42"/><rect x="1075.50" y="115.65" width="0.60" height="1" fill="#9cdcfe" opacity="0.42"/><rect x="1076.70" y="115.65" width="0.60" height="1" fill="#b4b4b4" opacity="0.42"/><rect x="1077.90" y="115.65" width="1.20" height="1" fill="#4ec9b0" opacity="0.42"/><rect x="1079.10" y="115.65" width="0.60" height="1" fill="#ffffff" opacity="0.42"/><rect x="1079.70" y="115.65" width="1.80" height="1" fill="#dcdcaa" opacity="0.42"/><rect x="1081.50" y="115.65" width="0.60" height="1" fill="#ffd700" opacity="0.42"/><rect x="1082.10" y="115.65" width="0.60" height="1" fill="#9cdcfe" opacity="0.42"/><rect x="1082.70" y="115.65" width="0.60" height="1" fill="#ffffff" opacity="0.42"/><rect x="1083.90" y="115.65" width="2.40" height="1" fill="#9cdcfe" opacity="0.42"/><rect x="1086.30" y="115.65" width="0.60" height="1" fill="#b4b4b4" opacity="0.42"/><rect x="1086.90" y="115.65" width="0.60" height="1" fill="#b5cea8" opacity="0.42"/><rect x="1087.50" y="115.65" width="0.60" height="1" fill="#ffd700" opacity="0.42"/><rect x="1073.10" y="116.84" width="0.60" height="1" fill="#9cdcfe" opacity="0.42"/><rect x="1074.30" y="116.84" width="0.60" height="1" fill="#b4b4b4" opacity="0.42"/><rect x="1075.50" y="116.84" width="0.60" height="1" fill="#9cdcfe" opacity="0.42"/><rect x="1076.70" y="116.84" width="0.60" height="1" fill="#b4b4b4" opacity="0.42"/><rect x="1077.90" y="116.84" width="1.20" height="1" fill="#4ec9b0" opacity="0.42"/><rect x="1079.10" y="116.84" width="0.60" height="1" fill="#ffffff" opacity="0.42"/><rect x="1079.70" y="116.84" width="1.80" height="1" fill="#dcdcaa" opacity="0.42"/><rect x="1081.50" y="116.84" width="0.60" height="1" fill="#ffd700" opacity="0.42"/><rect x="1082.10" y="116.84" width="0.60" height="1" fill="#9cdcfe" opacity="0.42"/><rect x="1082.70" y="116.84" width="0.60" height="1" fill="#ffffff" opacity="0.42"/><rect x="1083.90" y="116.84" width="2.40" height="1" fill="#9cdcfe" opacity="0.42"/><rect x="1086.30" y="116.84" width="0.60" height="1" fill="#b4b4b4" opacity="0.42"/><rect x="1086.90" y="116.84" width="0.60" height="1" fill="#b5cea8" opacity="0.42"/><rect x="1087.50" y="116.84" width="0.60" height="1" fill="#ffd700" opacity="0.42"/><rect x="1073.10" y="118.03" width="3.60" height="1" fill="#c586c0" opacity="0.42"/><rect x="1077.30" y="118.03" width="0.60" height="1" fill="#9cdcfe" opacity="0.42"/></svg>
<div class="t" style="left:23.5px;top:590.20px;font-size:9.8px;line-height:9.8px;color:#e8e8e8;">2</div>
<div class="t" style="left:44px;top:590.20px;font-size:9.8px;line-height:9.8px;color:#e8e8e8;">4</div>
<div class="t" style="left:64.3px;top:590.20px;font-size:9.8px;line-height:9.8px;color:#e8e8e8;">8</div>
<div class="t" style="left:82.6px;top:591.04px;font-size:8.7px;line-height:8.7px;color:#e8e8e8;">AWS: AWS Builder ID</div>
<div class="t" style="left:188.5px;top:590.87px;font-size:8.9px;line-height:8.9px;color:#e8e8e8;">CodeWhisperer</div>
<div class="t" style="left:261.8px;top:590.61px;font-size:9.2px;line-height:9.2px;color:#e8e8e8;">Formatting with autopep8</div>
<div class="t" style="left:731px;top:590.95px;font-size:8.8px;line-height:8.8px;color:#e8e8e8;">Ln 38, Col 13</div>
<div class="t" style="left:793.8px;top:590.95px;font-size:8.8px;line-height:8.8px;color:#e8e8e8;letter-spacing:-0.33px;">Spaces: 4</div>
<div class="t" style="left:842.2px;top:590.95px;font-size:8.8px;line-height:8.8px;color:#e8e8e8;">UTF-8</div>
<div class="t" style="left:878.5px;top:590.95px;font-size:8.8px;line-height:8.8px;color:#e8e8e8;letter-spacing:-0.9px;">CRLF</div>
<div class="t" style="left:923px;top:590.78px;font-size:9px;line-height:9px;color:#e8e8e8;">Python</div>
<div class="t" style="left:963.2px;top:590.78px;font-size:9px;line-height:9px;color:#e8e8e8;">3.11.0 64-bit</div>
<div class="t" style="left:1063.3px;top:590.70px;font-size:9.1px;line-height:9.1px;color:#e8e8e8;">Prettier</div>
<svg class="s" style="left:0;top:0" width="1148" height="605" viewBox="0 0 1148 605" fill="none" stroke="#e0e0e0" stroke-width="1" stroke-linejoin="round" stroke-linecap="round">
<circle cx="16.3" cy="594.2" r="4.4" stroke-width="1.2"/>
<path d="M14.6 592.5 L18 595.9 M18 592.5 L14.6 595.9"/>
<path d="M36.7 589.8 L41.3 597.7 H32.1 Z" stroke-width="1.15"/>
<path d="M36.7 592.6 V595 M36.7 596.2 V596.5" stroke-width="0.9"/>
<circle cx="57" cy="594.2" r="4.5" stroke-width="1.2"/>
<path d="M57 592.6 V596.6" stroke-width="1.2"/>
<path d="M180.8 589 Q177.6 593.6 181.8 598.4" stroke-width="1.1"/>
<!-- {} python -->
<path d="M912.2 590.2 Q910.8 590.4 910.9 592 V593.4 Q910.8 594.4 910 594.5 Q910.8 594.8 910.9 595.6 V597 Q910.9 598.4 912.2 598.6" stroke-width="0.9"/>
<circle cx="915.6" cy="596.4" r="2.2" fill="#e8e8e8" stroke="none"/>
<path d="M915.6 590 V594.6" stroke-width="1"/>
<!-- copilot-like -->
<path d="M1028.4 593.4 Q1027.6 590 1031.6 589.6 Q1035.8 590 1035.1 593.4 Q1037.3 594.6 1037.2 596.8 Q1036.8 599.8 1031.7 599.8 Q1026.4 599.8 1026.2 596.8 Q1026.2 594.6 1028.4 593.4 Z" fill="#e8e8e8" stroke="none"/>
<circle cx="1029.4" cy="592.3" r="1.05" fill="#000" stroke="none"/><circle cx="1033.6" cy="592.3" r="1.05" fill="#000" stroke="none"/>
<rect x="1028.2" y="594.6" width="6.8" height="3.2" rx="1.4" fill="#222" stroke="none"/>
<circle cx="1030.4" cy="596.1" r="0.6" fill="#ddd" stroke="none"/><circle cx="1032.8" cy="596.1" r="0.6" fill="#ddd" stroke="none"/>
<!-- prettier -->
<circle cx="1055.3" cy="594.1" r="4.2" stroke-width="1.1"/>
<path d="M1052.3 597.1 L1058.3 591.1" stroke-width="1.1"/>
<!-- feedback -->
<path d="M1109 590 H1114.4 V594.6 H1111.6" stroke-width="0.95"/>
<circle cx="1107.8" cy="593.6" r="1.8" stroke-width="0.95"/>
<path d="M1104.6 598.8 Q1105.4 595.8 1107.8 595.8 Q1110.2 595.8 1110.8 598.8" stroke-width="0.95"/>
<!-- bell -->
<path d="M1128.2 597 H1135.8 M1128.8 597 V593.8 Q1128.8 590.4 1132 590.4 M1135.2 594 V597 M1131 598.6 H1133" stroke-width="1"/>
<circle cx="1134.6" cy="590.9" r="2" fill="#fff" stroke="none"/>
</svg>
<div class="r" style="left:1138px;top:74px;width:10px;height:253px;background:#497d8f;"></div>
<div class="r" style="left:1138px;top:333px;width:10px;height:1px;background:#bbbbbb;"></div>
<div class="r" style="left:1145px;top:333.5px;width:3px;height:6.5px;background:#f14c4c;"></div>
<div class="r" style="left:1138px;top:334px;width:1px;height:252px;background:#1a1a1a;"></div>
<div class="r" style="left:0px;top:247px;width:2px;height:36px;background:#fff;"></div>
</body></html>
